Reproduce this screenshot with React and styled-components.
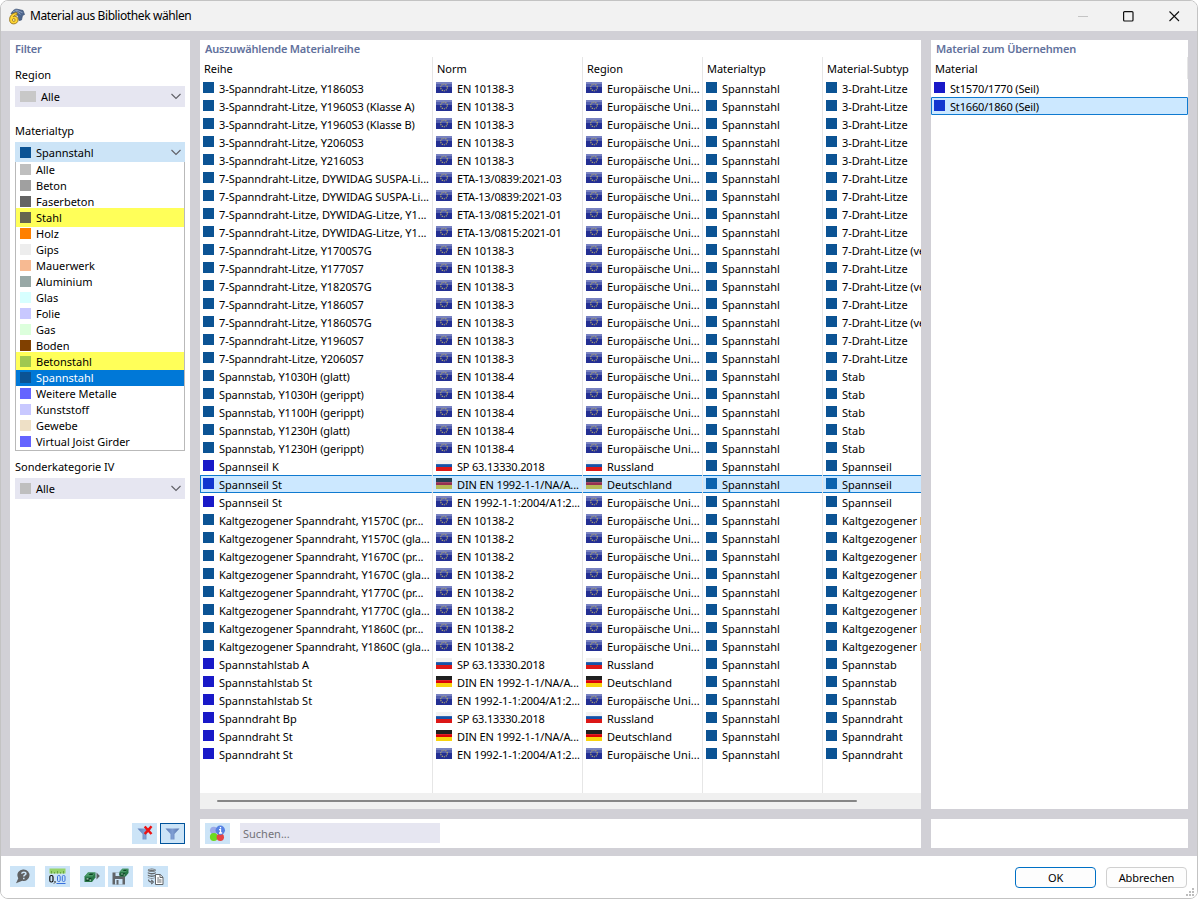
import React from "react";
import styled, { createGlobalStyle } from "styled-components";

const GlobalStyle = createGlobalStyle`
  * { box-sizing: border-box; }
  html, body { margin: 0; background: #fff; overflow: hidden; }
  body, button, input { font-family: "Noto Sans", "Open Sans", sans-serif; font-size: 11px; color: #000; }
`;

const Window = styled.div`
  width: 1198px;
  height: 899px;
  display: flex;
  flex-direction: column;
  border: 1px solid #c3c3c3;
  border-radius: 8px;
  overflow: hidden;
  background: #fff;
`;
const TitleBar = styled.header`
  height: 30px;
  flex: none;
  display: flex;
  align-items: center;
  padding-left: 7px;
  background: #f2f2f2;
`;
const TitleText = styled.div`
  flex: 1;
  padding-left: 5px;
  font-size: 12px;
  letter-spacing: -0.4px;
  line-height: 18px;
`;
const WindowButton = styled.div`
  width: 46px;
  height: 30px;
  display: flex;
  align-items: center;
  justify-content: center;
  svg { display: block; }
`;
const Body = styled.main`
  height: 825px;
  flex: none;
  display: flex;
  gap: 10px;
  padding: 9px 9px 8px;
  background: #d1d0d6;
`;
const Column = styled.section`
  width: ${(p) => p.$width}px;
  flex: none;
  display: flex;
  flex-direction: column;
  gap: 10px;
`;
const Panel = styled.div`
  flex: ${(p) => (p.$height ? "none" : 1)};
  height: ${(p) => (p.$height ? `${p.$height}px` : "auto")};
  min-height: 0;
  display: flex;
  flex-direction: column;
  background: #fff;
  overflow: hidden;
`;
const PanelTitle = styled.h2`
  height: 17px;
  flex: none;
  margin: 0;
  padding: 1px 5px 0;
  line-height: 16px;
  font-size: 11px;
  font-weight: 600;
  letter-spacing: -0.19px;
  color: #62719c;
  white-space: nowrap;
`;
const FilterLabel = styled.label`
  display: block;
  height: 16px;
  margin: ${(p) => p.$top}px 0 3px 5px;
  line-height: 16px;
`;
const Combo = styled.div`
  height: ${(p) => (p.$open ? 20 : 21)}px;
  flex: none;
  margin: 0 5px;
  display: flex;
  align-items: center;
  padding: 0 4px 0 5px;
  background: ${(p) => (p.$open ? "#cce4f7" : "#e6e6f1")};
  span { flex: 1; padding-left: 5px; line-height: 16px; padding-top: 1px; }
`;
const Swatch = styled.i`
  width: ${(p) => p.$width || 11}px;
  height: 11px;
  flex: none;
  background: ${(p) => p.$color};
`;
const DropList = styled.ul`
  height: 289px;
  flex: none;
  list-style: none;
  margin: 0 5px;
  padding: 0;
  border: 1px solid #b9b9b9;
  border-top: 0;
`;
const DropItem = styled.li`
  height: ${(p) => 16 + (p.$up || 0) + (p.$down || 0)}px;
  margin: ${(p) => `-${p.$up || 0}px 0 -${p.$down || 0}px`};
  padding: ${(p) => 2 + (p.$up || 0)}px 0 0 4px;
  display: flex;
  align-items: flex-start;
  background: ${(p) => p.$bg || "transparent"};
  color: ${(p) => p.$fg || "#000"};
  span { padding-left: 5px; line-height: 11px; }
`;
const FilterActions = styled.div`
  flex: 1;
  display: flex;
  justify-content: flex-end;
  align-items: flex-end;
  gap: 3px;
  padding: 0 5px 4px;
`;
const ToolButton = styled.button`
  width: 25px;
  height: 21px;
  flex: none;
  padding: 0;
  display: flex;
  align-items: center;
  justify-content: center;
  border: ${(p) => (p.$active ? "1px solid #00539c" : "0")};
  background: #cce4f7;
  margin-left: ${(p) => p.$gap || 0}px;
  svg { display: block; flex: none; }
`;
const TableRow = styled.div`
  display: flex;
  flex: ${(p) => (p.$fill ? 1 : "none")};
  height: ${(p) => (p.$fill ? "auto" : `${p.$height || 18}px`)};
`;
const Cell = styled.div`
  width: ${(p) => p.$width}px;
  flex: none;
  display: flex;
  align-items: flex-start;
  padding: 3px 0 0 3px;
  overflow: hidden;
  white-space: nowrap;
  border-right: ${(p) => (p.$last ? 0 : 1)}px solid #e6e6e6;
  background: ${(p) => (p.$selected ? "#cce8ff" : "transparent")} padding-box;
  position: relative;
  &::after {
    content: "";
    display: ${(p) => (p.$selected ? "block" : "none")};
    position: absolute;
    inset: 0;
    border: solid #0f7ad0;
    border-width: ${(p) => `1px ${p.$right ? 1 : 0}px 1px ${p.$left ? 1 : 0}px`};
    border-radius: ${(p) => (p.$left ? 1 : 0)}px;
  }
  svg { display: block; flex: none; }
  span { line-height: 13px; padding-left: 5px; letter-spacing: ${(p) => p.$spacing || 0}px; }
`;
const HeadCell = styled.div`
  width: ${(p) => p.$width}px;
  flex: none;
  padding-left: 4px;
  line-height: 23px;
  border-right: ${(p) => (p.$last ? 0 : 1)}px solid #e6e6e6;
  white-space: nowrap;
  letter-spacing: -0.03px;
`;
const ScrollBar = styled.div`
  height: 16px;
  flex: none;
  padding: 7px 64px 0 17px;
  background: #f0f0f0;
`;
const ScrollThumb = styled.div`
  height: 2px;
  border-radius: 1px;
  background: #868686;
`;
const SearchRow = styled.div`
  display: flex;
  gap: 10px;
  padding: 4px 5px;
`;
const SearchField = styled.input`
  width: 200px;
  height: 20px;
  border: 0;
  padding: 0 3px;
  background: #e6e6f1;
  outline: 0;
  &::placeholder { color: #727278; opacity: 1; }
`;
const Footer = styled.footer`
  flex: 1;
  display: flex;
  align-items: flex-start;
  padding: 10px 10px 0 9px;
  background: #fff;
`;
const Spacer = styled.div`flex: 1;`;
const DialogButton = styled.button`
  width: 81px;
  height: 21px;
  margin: 1px 0 0 ${(p) => (p.$primary ? 0 : 10)}px;
  padding: 1px 0 0;
  line-height: 16px;
  letter-spacing: ${(p) => (p.$primary ? -0.3 : -0.05)}px;
  border: 1px solid ${(p) => (p.$primary ? "#0070c5" : "#d0d0d0")};
  border-radius: 4px;
  background: #fdfdfd;
`;
const Grip = styled.svg`
  position: absolute;
  left: 1186px;
  top: 888px;
`;

const Chevron = () => (
  <svg width="11" height="7" viewBox="0 0 11 7" fill="none" stroke="#5f5f66" strokeWidth="1.1">
    <path d="M1.500 1l4.500 4.500L10.500 1" />
  </svg>
);

const Flag = ({ kind, selected }) => {
  if (kind === "eu")
    return (
      <svg width="16" height="11" viewBox="0 0 16 11">
        <rect width="16" height="11" fill="#232f93" />
        <rect width="16" height="5" fill="#6672b9" opacity=".7" />
        <rect width="16" height="2" fill="#98a1d2" opacity=".55" />
        <circle cx="8" cy="5.5" r="3.300" fill="none" stroke="#c4b76a" strokeWidth="1.100" strokeDasharray="1.100 .97" />
      </svg>
    );
  const bands = kind === "ru" ? ["#f1f1f1", "#1552a8", "#dc1717"] : selected ? ["#06243c", "#963052", "#b5b957"] : ["#000", "#db0208", "#f8d30e"];
  return (
    <svg width="16" height="11" viewBox="0 0 16 11" shapeRendering="crispEdges">
      <rect width="16" height="4" fill={bands[0]} />
      <rect y="4" width="16" height="3" fill={bands[1]} />
      <rect y="7" width="16" height="4" fill={bands[2]} />
      <rect width="16" height="5" fill="#fff" opacity=".12" />
    </svg>
  );
};

const AppIcon = () => (
  <svg width="17" height="17" viewBox="0 0 17 17">
    <path d="M3 6C4.500 2.500 7 .8 9 1.200l6 1.300 1.500 4-2 1-1 4.500-2.500.5-1-5-4-2z" fill="#4d668e" stroke="#3a5072" strokeWidth=".7" />
    <path d="M5 3.800l4-1.600 5.500 2.600M8 2.800l4.500 3.600" fill="none" stroke="#9db0cc" strokeWidth=".8" />
    <path d="M9 4.600C4.600 4.600 1.600 7.800 1.600 11.600c0 2.700 1.600 4.300 4 4.300 2.600 0 4.500-1.700 4.500-4.100 0-2.200-1.500-3.500-3.300-3.500-.7 0-1.200.1-1.600.4C6 7.500 7.300 6.900 9 6.900z" fill="#ffd633" stroke="#94731c" strokeWidth=".9" />
    <ellipse cx="5.800" cy="12" rx="1.300" ry="1.500" fill="#fff0a0" stroke="#94731c" strokeWidth=".8" />
  </svg>
);

const Funnel = ({ crossed }) => (
  <svg width="20" height="18" viewBox="0 0 20 18">
    <defs>
      <linearGradient id="funnel" x1="0" x2="1">
        <stop offset="0" stopColor="#5d7db7" />
        <stop offset=".5" stopColor="#7f9ed2" />
        <stop offset="1" stopColor="#5875ae" />
      </linearGradient>
    </defs>
    <path d="M2.500 3.500h14l-5 5.500v5.500h-4V9z" fill="url(#funnel)" />
    {crossed && <path d="M9.700 1.500l6.800 7.500M16.500 1.200L9.700 9" stroke="#ee1111" strokeWidth="2.500" />}
  </svg>
);

const InfoBalls = () => (
  <svg width="17" height="17" viewBox="0 0 17 17">
    <circle cx="4.800" cy="5.500" r="3.800" fill="#9aa9e8" />
    <circle cx="4.800" cy="12" r="3.900" fill="#6cda20" />
    <circle cx="11.300" cy="12.200" r="3.700" fill="#e64444" />
    <circle cx="11.300" cy="5.200" r="4.700" fill="#5681e4" />
    <path d="M11.500 2v1.400M10 4.700h1.500V8M10 8h3.200" stroke="#fff" strokeWidth="1.300" fill="none" />
  </svg>
);

const HelpIcon = () => (
  <svg width="17" height="17" viewBox="0 0 17 17">
    <path d="M9.800 1.500a5.700 5.700 0 1 1-1.500 11.200L2 15.200l2.300-5A5.700 5.700 0 0 1 9.800 1.500z" fill="#5f6163" />
    <path d="M7.700 5.700c.2-2 4.200-2 4.200 0 0 1.300-2.100 1.200-2.100 2.900M9.800 9.700v1.500" fill="none" stroke="#cce4f7" strokeWidth="1.500" />
  </svg>
);

const UnitsIcon = () => (
  <svg width="17" height="17" viewBox="0 0 17 17">
    <rect x=".5" y=".500" width="16" height="5" fill="#96d36b" />
    <path d="M2.500 3v2.500M5.500 4v1.500M8.500 3v2.500M11.500 4v1.500M14.500 3v2.500" stroke="#68a544" />
    <g fill="none">
      <rect x=".8" y="7.500" width="3.200" height="6.500" rx="1.400" stroke="#111" strokeWidth="1.200" />
      <path d="M6 13v1.500l-1 1" stroke="#111" />
      <rect x="8.500" y="7.500" width="2.700" height="6" rx="1.200" stroke="#3770dc" />
      <rect x="13.300" y="7.500" width="2.700" height="6" rx="1.200" stroke="#3770dc" />
      <path d="M7.500 15.500h9" stroke="#3770dc" />
    </g>
  </svg>
);

const Block = ({ x = 0, y = 0, scale = 1 }) => (
  <g transform={`translate(${x} ${y}) scale(${scale})`}>
    <path d="M0 5l3.500-4H11v5L7.500 10.500H0z" fill="#287848" />
    <path d="M0 5l3.500-4H11L8 5z" fill="#4b9a68" />
    <path d="M1.300 6.500h5.500v3H1.300zM4 3.600L5.500 2h3.800L7.800 3.600z" fill="#0e4526" />
    <path d="M2 6.800h2v1.200H2zM5 8h1.600v1.200H5z" fill="#b5dcc3" />
  </g>
);

const ImportIcon = () => (
  <svg width="18" height="17" viewBox="0 0 18 17">
    <Block x={.5} y={3.5} />
    <path d="M12.500 4.500L15.800 8l-3.300 3.500z" fill="#5c6265" />
  </svg>
);

const SaveIcon = () => (
  <svg width="18" height="17" viewBox="0 0 18 17">
    <path d="M.5 4.500h10L13 7v9.500H.500z" fill="#606468" />
    <path d="M3.500 4.500h6v3.500h-6zM3 11h7.500v5.500H3z" fill="#cce4f7" />
    <path d="M4.500 12h2v4.500h-2zM7 5.200h1.500v2H7z" fill="#606468" />
    <Block x={7.5} y={0} scale={0.82} />
  </svg>
);

const DatabaseIcon = () => (
  <svg width="18" height="17" viewBox="0 0 18 17">
    <g fill="#65696c">
      <ellipse cx="4.800" cy="2.200" rx="4" ry="1.600" />
      <path d="M.8 4c1.500 1.300 6.500 1.300 8 0v1.300c-1.500 1.500-6.500 1.500-8 0zM.8 6.500c1.500 1.300 6.500 1.300 8 0v1.300c-1.500 1.500-6.500 1.500-8 0zM.8 9c1.500 1.300 6.500 1.300 8 0v.5c-1.500 1.500-6.500 1.500-8 0z" />
    </g>
    <path d="M1.500 2.200c1.500-.9 5-.9 6.600 0" fill="none" stroke="#cfdce5" strokeWidth=".7" />
    <path d="M8.500 6.500h4.800l2.700 2.700v7.300H8.500z" fill="#fff" stroke="#606468" />
    <path d="M13 6.500v3h3M10.200 10h2M10.200 12h4.300M10.200 14h4.300" fill="none" stroke="#606468" />
    <path d="M1.500 11.500c0 1.700 1 2.500 3.500 2.500M4.300 12l2 2-2 2" fill="none" stroke="#606468" strokeWidth="1.200" />
  </svg>
);

const types = [
  ["Alle", "#bfbfbf"],
  ["Beton", "#a0a0a0"],
  ["Faserbeton", "#646464"],
  ["Stahl", "#66664f", { $bg: "#ffff59", $up: 2, $down: 1 }],
  ["Holz", "#ff8000"],
  ["Gips", "#ededed"],
  ["Mauerwerk", "#f7ba92"],
  ["Aluminium", "#98a8a6"],
  ["Glas", "#d7ffff"],
  ["Folie", "#c8c8ff"],
  ["Gas", "#dcffdc"],
  ["Boden", "#804000"],
  ["Betonstahl", "#a0c850", { $bg: "#ffff59", $up: 2 }],
  ["Spannstahl", "#0b5394", { $bg: "#0078d7", $fg: "#fff" }],
  ["Weitere Metalle", "#6464ff"],
  ["Kunststoff", "#c8c8ff"],
  ["Gewebe", "#eee0c6"],
  ["Virtual Joist Girder", "#6464ff"],
];

const strand3 = (name) => [name, "eu", "EN 10138-3", "3-Draht-Litze"];
const strand7 = (name, norm = "EN 10138-3", sub = "7-Draht-Litze") => [name, "eu", norm, sub];
const rod = (name) => [name, "eu", "EN 10138-4", "Stab"];
const wire = (name) => [`Kaltgezogener Spanndraht, ${name}`, "eu", "EN 10138-2", "Kaltgezogener Draht"];
const RU = "SP 63.13330.2018";
const DE = "DIN EN 1992-1-1/NA/A...";
const EU = "EN 1992-1-1:2004/A1:2...";

const series = [
  strand3("3-Spanndraht-Litze, Y1860S3"),
  strand3("3-Spanndraht-Litze, Y1960S3 (Klasse A)"),
  strand3("3-Spanndraht-Litze, Y1960S3 (Klasse B)"),
  strand3("3-Spanndraht-Litze, Y2060S3"),
  strand3("3-Spanndraht-Litze, Y2160S3"),
  strand7("7-Spanndraht-Litze, DYWIDAG SUSPA-Li...", "ETA-13/0839:2021-03"),
  strand7("7-Spanndraht-Litze, DYWIDAG SUSPA-Li...", "ETA-13/0839:2021-03"),
  strand7("7-Spanndraht-Litze, DYWIDAG-Litze, Y1...", "ETA-13/0815:2021-01"),
  strand7("7-Spanndraht-Litze, DYWIDAG-Litze, Y1...", "ETA-13/0815:2021-01"),
  strand7("7-Spanndraht-Litze, Y1700S7G", undefined, "7-Draht-Litze (verdichtet)"),
  strand7("7-Spanndraht-Litze, Y1770S7"),
  strand7("7-Spanndraht-Litze, Y1820S7G", undefined, "7-Draht-Litze (verdichtet)"),
  strand7("7-Spanndraht-Litze, Y1860S7"),
  strand7("7-Spanndraht-Litze, Y1860S7G", undefined, "7-Draht-Litze (verdichtet)"),
  strand7("7-Spanndraht-Litze, Y1960S7"),
  strand7("7-Spanndraht-Litze, Y2060S7"),
  rod("Spannstab, Y1030H (glatt)"),
  rod("Spannstab, Y1030H (gerippt)"),
  rod("Spannstab, Y1100H (gerippt)"),
  rod("Spannstab, Y1230H (glatt)"),
  rod("Spannstab, Y1230H (gerippt)"),
  ["Spannseil K", "ru", RU, "Spannseil", 1],
  ["Spannseil St", "de", DE, "Spannseil", 1, 1],
  ["Spannseil St", "eu", EU, "Spannseil", 1],
  wire("Y1570C (pr..."),
  wire("Y1570C (gla..."),
  wire("Y1670C (pr..."),
  wire("Y1670C (gla..."),
  wire("Y1770C (pr..."),
  wire("Y1770C (gla..."),
  wire("Y1860C (pr..."),
  wire("Y1860C (gla..."),
  ["Spannstahlstab A", "ru", RU, "Spannstab", 1],
  ["Spannstahlstab St", "de", DE, "Spannstab", 1],
  ["Spannstahlstab St", "eu", EU, "Spannstab", 1],
  ["Spanndraht Bp", "ru", RU, "Spanndraht", 1],
  ["Spanndraht St", "de", DE, "Spanndraht", 1],
  ["Spanndraht St", "eu", EU, "Spanndraht", 1],
];

const regions = { eu: "Europäische Uni...", ru: "Russland", de: "Deutschland" };
const widths = [233, 150, 120, 120, 98];

const nameSpacing = (name) => {
  if (name.includes("DYWIDAG")) return -0.04;
  if (name.startsWith("Kalt")) return -0.07;
  return /\d/.test(name) ? -0.1 : 0.03;
};
const normSpacing = (norm) => (norm === DE || norm === EU ? -0.12 : -0.19);

const SeriesRow = ({ row: [name, flag, norm, sub, special, selected] }) => {
  const steel = selected ? "#0b62ae" : "#0b5394";
  return (
    <TableRow>
      <Cell $width={widths[0]} $spacing={nameSpacing(name)} $selected={selected} $left>
        <Swatch $color={special ? (selected ? "#1236cf" : "#1919c8") : "#0b5394"} />
        <span>{name}</span>
      </Cell>
      <Cell $width={widths[1]} $spacing={normSpacing(norm)} $selected={selected}>
        <Flag kind={flag} selected={selected} />
        <span>{norm}</span>
      </Cell>
      <Cell $width={widths[2]} $selected={selected}>
        <Flag kind={flag} selected={selected} />
        <span>{regions[flag]}</span>
      </Cell>
      <Cell $width={widths[3]} $spacing={0.03} $selected={selected}>
        <Swatch $color={steel} />
        <span>Spannstahl</span>
      </Cell>
      <Cell $width={widths[4]} $spacing={/\d/.test(sub) ? -0.08 : 0} $selected={selected} $last>
        <Swatch $color={steel} />
        <span>{sub}</span>
      </Cell>
    </TableRow>
  );
};

export default function App() {
  return (
    <>
      <GlobalStyle />
      <Window>
        <TitleBar>
          <AppIcon />
          <TitleText>Material aus Bibliothek wählen</TitleText>
          <WindowButton>
            <svg width="11" height="11"><path d="M1 5.500h10" stroke="#c4c4c4" /></svg>
          </WindowButton>
          <WindowButton>
            <svg width="11" height="11"><rect x=".6" y=".6" width="9.400" height="9.400" rx="1" fill="none" stroke="#111" strokeWidth="1.200" /></svg>
          </WindowButton>
          <WindowButton>
            <svg width="11" height="11"><path d="M.5.500l9.500 9.500M10 .500l-9.500 9.500" stroke="#111" strokeWidth="1.100" /></svg>
          </WindowButton>
        </TitleBar>
        <Body>
          <Column $width={180}>
            <Panel>
              <PanelTitle>Filter</PanelTitle>
              <FilterLabel $top={10}>Region</FilterLabel>
              <Combo>
                <Swatch $color="#c8c8c8" $width={16} />
                <span>Alle</span>
                <Chevron />
              </Combo>
              <FilterLabel $top={16}>Materialtyp</FilterLabel>
              <Combo $open>
                <Swatch $color="#0b5394" />
                <span>Spannstahl</span>
                <Chevron />
              </Combo>
              <DropList>
                {types.map(([label, color, state]) => (
                  <DropItem key={label} {...state}>
                    <Swatch $color={color} />
                    <span>{label}</span>
                  </DropItem>
                ))}
              </DropList>
              <FilterLabel $top={8}>Sonderkategorie IV</FilterLabel>
              <Combo>
                <Swatch $color="#bfbfbf" />
                <span>Alle</span>
                <Chevron />
              </Combo>
              <FilterActions>
                <ToolButton><Funnel crossed /></ToolButton>
                <ToolButton $active><Funnel /></ToolButton>
              </FilterActions>
            </Panel>
          </Column>
          <Column $width={721}>
            <Panel>
              <PanelTitle>Auszuwählende Materialreihe</PanelTitle>
              <TableRow $height={22}>
                {["Reihe", "Norm", "Region", "Materialtyp", "Material-Subtyp"].map((h, i) => (
                  <HeadCell key={h} $width={widths[i]} $last={i === 4}>{h}</HeadCell>
                ))}
              </TableRow>
              {series.map((row, i) => <SeriesRow key={i} row={row} />)}
              <TableRow $fill>
                {widths.map((w, i) => <Cell key={i} $width={w} $last={i === 4} />)}
              </TableRow>
              <ScrollBar><ScrollThumb /></ScrollBar>
            </Panel>
            <Panel $height={29}>
              <SearchRow>
                <ToolButton><InfoBalls /></ToolButton>
                <SearchField placeholder="Suchen..." />
              </SearchRow>
            </Panel>
          </Column>
          <Column $width={257}>
            <Panel>
              <PanelTitle>Material zum Übernehmen</PanelTitle>
              <TableRow $height={22}>
                <HeadCell $width={257}>Material</HeadCell>
              </TableRow>
              <TableRow>
                <Cell $width={257} $spacing={-0.17} $last>
                  <Swatch $color="#1919c8" />
                  <span>St1570/1770 (Seil)</span>
                </Cell>
              </TableRow>
              <TableRow>
                <Cell $width={257} $spacing={-0.17} $last $selected $left $right>
                  <Swatch $color="#1236cf" />
                  <span>St1660/1860 (Seil)</span>
                </Cell>
              </TableRow>
            </Panel>
            <Panel $height={29} />
          </Column>
        </Body>
        <Footer>
          <ToolButton><HelpIcon /></ToolButton>
          <ToolButton $gap={10}><UnitsIcon /></ToolButton>
          <ToolButton $gap={10}><ImportIcon /></ToolButton>
          <ToolButton $gap={3}><SaveIcon /></ToolButton>
          <ToolButton $gap={10}><DatabaseIcon /></ToolButton>
          <Spacer />
          <DialogButton $primary>OK</DialogButton>
          <DialogButton>Abbrechen</DialogButton>
        </Footer>
      </Window>
      <Grip width="9" height="9" viewBox="0 0 9 9" fill="#bdbdbd">
        <path d="M6 0h2v2H6zM3 3h2v2H3zM6 3h2v2H6zM0 6h2v2H0zM3 6h2v2H3zM6 6h2v2H6z" />
      </Grip>
    </>
  );
}
